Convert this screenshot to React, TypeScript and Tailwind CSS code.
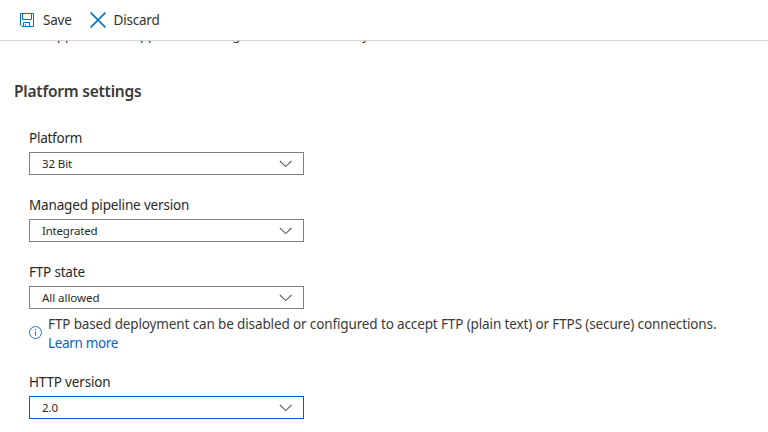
function Chevron() {
  return (
    <svg width="13" height="8" viewBox="0 0 13 8" fill="none" stroke="#605e5c" strokeWidth="1.05">
      <path d="M0.9 1 6.7 6.6 12.5 1" />
    </svg>
  );
}

function Field({ label, value, active = false, labelClass, valueClass }: { label: string; value: string; active?: boolean; labelClass: string; valueClass: string }) {
  return (
    <div className="w-[275px]">
      <div className={`h-5 text-[13.5px] leading-[18px] whitespace-nowrap text-[#292827] ${labelClass}`}>{label}</div>
      <button className={`mt-[3px] flex h-[23px] w-full items-center justify-between border pr-[11px] pl-3 ${active ? "border-[#0b5fc4]" : "border-[#7f7f7f]"}`}>
        <span className={`text-[11.5px] leading-5 text-[#292827] ${valueClass}`}>{value}</span>
        <Chevron />
      </button>
    </div>
  );
}

export default function App() {
  return (
    <div className="flex h-[432px] w-[768px] flex-col overflow-hidden bg-white font-['Noto_Sans','Open_Sans',sans-serif]">
      <header className="flex h-[41px] shrink-0 items-center border-b border-[#d2d2d2] pl-5 text-[13.5px] text-[#323130]">
        <svg width="14" height="14" viewBox="0 0 14 14" fill="none" stroke="#0072bc" strokeWidth="1">
          <path d="M.5.5h13v13H2L.5 12ZM2.5.5v6h9v-6M3.5 13.5v-4h6v4M5.5 13.5v-2" />
        </svg>
        <span className="ml-[9px] w-[47px] tracking-[-0.2px]">Save</span>
        <svg width="16" height="16" viewBox="0 0 16 16" fill="none" stroke="#0072bc" strokeWidth="1.5">
          <path d="m.6.6 14.8 14.8M15.4.6.6 15.4" />
        </svg>
        <span className="ml-[7.5px] tracking-[-0.2px]">Discard</span>
      </header>
      <main className="flex-1 overflow-hidden">
        <div className="h-[9px] overflow-hidden">
          <p className="-mt-[16px] flex pl-[31px] text-[13px] leading-5 whitespace-nowrap text-[#323130]">
            <span className="w-[83px]">an app and</span>
            <span className="w-[84px]">an app as</span>
            <span className="w-[145px]">settings are stored</span>
            <span>only</span>
          </p>
        </div>
        <h1 className="mt-[29px] pl-[14px] text-[15.5px] leading-6 font-semibold tracking-[-0.22px] text-[#3b3a39]">Platform settings</h1>
        <div className="mt-[26px] flex flex-col gap-[21px] pl-[29px]">
          <Field label="Platform" value="32 Bit" labelClass="tracking-[-0.25px]" valueClass="tracking-[-0.1px]" />
          <Field label="Managed pipeline version" value="Integrated" labelClass="tracking-[-0.16px]" valueClass="tracking-[-0.2px]" />
          <Field label="FTP state" value="All allowed" labelClass="tracking-[-0.2px]" valueClass="tracking-[-0.05px]" />
        </div>
        <div className="mt-[6px] flex pl-[29px]">
          <svg className="mt-[11px]" width="13" height="13" viewBox="0 0 13 13" fill="none" stroke="#1a70d2">
            <circle cx="6.5" cy="6.5" r="6" />
            <path d="M6.5 5.3v4.4M6.5 3v1.2" />
          </svg>
          <p className="ml-[6px] text-[13.5px] leading-[19px] tracking-[-0.13px] whitespace-nowrap text-[#3b3a39]">
            FTP based deployment can be disabled or configured to accept FTP (plain text) or FTPS (secure) connections.
            <br />
            <a className="tracking-[-0.33px] text-[#0b62c9]">Learn more</a>
          </p>
        </div>
        <div className="mt-[20px] pl-[29px]">
          <Field label="HTTP version" value="2.0" active labelClass="tracking-[-0.17px]" valueClass="tracking-[-0.1px]" />
        </div>
      </main>
    </div>
  );
}
